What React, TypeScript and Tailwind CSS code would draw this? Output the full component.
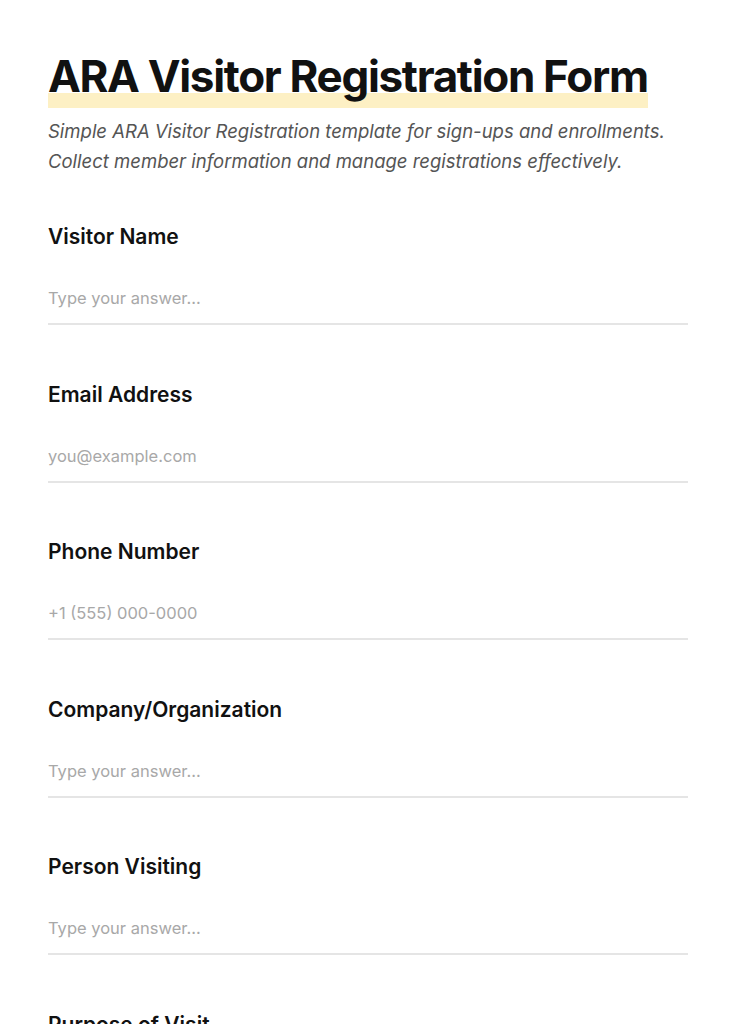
const fields = [
  { label: 'Visitor Name', placeholder: 'Type your answer...' },
  { label: 'Email Address', placeholder: 'you@example.com' },
  { label: 'Phone Number', placeholder: '+1 (555) 000-0000' },
  { label: 'Company/Organization', placeholder: 'Type your answer...' },
  { label: 'Person Visiting', placeholder: 'Type your answer...' },
  { label: 'Purpose of Visit', placeholder: 'Type your answer...' },
];

const App = () => {
  return (
    <div className="min-h-screen bg-white font-['Inter',sans-serif] text-[#111]">
      <div className="px-12 pt-[50px]">
        {/* Header */}
        <h1 className="whitespace-nowrap text-[44px] font-bold leading-[52px] tracking-[-0.03em]">
          <span className="bg-[linear-gradient(to_bottom,transparent_74%,#fdf0c4_74%,#fdf0c4_100%)] pb-[5px]">
            ARA Visitor Registration Form
          </span>
        </h1>
        <p className="mt-[14px] text-[18.5px] italic leading-[30px] text-[#555]">
          Simple ARA Visitor Registration template for sign-ups and enrollments.
          <br />
          Collect member information and manage registrations effectively.
        </p>

        {/* Fields */}
        <div className="mt-[47px] flex flex-col gap-[55.5px]">
          {fields.map((field) => (
            <div key={field.label}>
              <label className="block text-[21px] font-semibold leading-[28px]">
                {field.label}
              </label>
              <input
                type="text"
                placeholder={field.placeholder}
                className="mt-[36px] w-full border-b-2 border-[#e5e5e5] pb-[14px] text-[16.5px] leading-[22px] outline-none placeholder:text-[#a8a8a8]"
              />
            </div>
          ))}
        </div>
      </div>
    </div>
  );
};

export default App;
